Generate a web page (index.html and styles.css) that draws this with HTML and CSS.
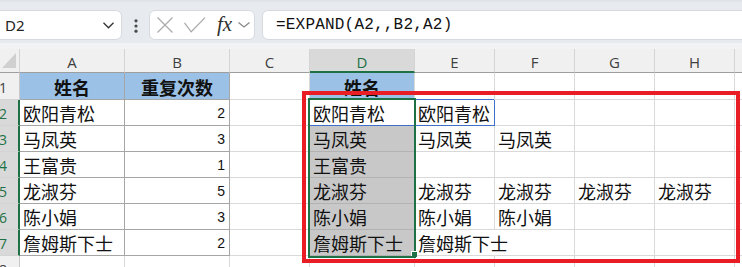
FILE: index.html
```html
<!DOCTYPE html>
<html lang="zh-CN">
<head>
    <meta charset="UTF-8">
    <meta name="viewport" content="width=device-width, initial-scale=1.0">
    <title>EXPAND</title>
    <link rel="stylesheet" href="styles.css">
</head>
<body>
    <div class="toolbar">
        <div class="namebox">
            <span>D2</span>
            <svg class="chev" width="11" height="7" viewBox="0 0 11 7"><polyline points="0.5,0.8 5.5,5.8 10.5,0.8"/></svg>
        </div>
        <svg class="dots" width="4" height="14" viewBox="0 0 4 14">
            <circle cx="2" cy="1.8" r="1.6"/><circle cx="2" cy="7" r="1.6"/><circle cx="2" cy="12.2" r="1.6"/>
        </svg>
        <div class="fxbox">
            <svg class="ico-x" width="16" height="16" viewBox="0 0 16 16"><line x1="0.5" y1="0.5" x2="15.5" y2="15.5"/><line x1="15.5" y1="0.5" x2="0.5" y2="15.5"/></svg>
            <svg class="ico-ok" width="22" height="16" viewBox="0 0 22 16"><polyline points="0.5,5.8 7.2,14.8 21,0.6"/></svg>
            <span class="fx">fx</span>
            <svg class="chev small" width="12" height="6" viewBox="0 0 12 6"><polyline points="0.5,0.5 6,5 11.5,0.5"/></svg>
        </div>
        <div class="formula">=EXPAND(A2,,B2,A2)</div>
    </div>

    <div class="sheet">
        <!-- column headers -->
        <div class="corner"><svg width="20" height="24" viewBox="0 0 20 24"><polygon points="16,4 16,19 2,19"/></svg></div>
        <div class="hd">A</div>
        <div class="hd">B</div>
        <div class="hd">C</div>
        <div class="hd on">D</div>
        <div class="hd">E</div>
        <div class="hd">F</div>
        <div class="hd">G</div>
        <div class="hd">H</div>
        <div class="hd"></div>

        <!-- row 1 -->
        <div class="rh"><span>1</span></div>
        <div class="cell th tb">姓名</div>
        <div class="cell th tb">重复次数</div>
        <div class="cell"></div>
        <div class="cell th">姓名</div>
        <div class="cell"></div>
        <div class="cell"></div>
        <div class="cell"></div>
        <div class="cell"></div>
        <div class="cell"></div>

        <!-- row 2 -->
        <div class="rh on"><span>2</span></div>
        <div class="cell tb">欧阳青松</div>
        <div class="cell tb num">2</div>
        <div class="cell"></div>
        <div class="cell act">欧阳青松</div>
        <div class="cell spill">欧阳青松</div>
        <div class="cell"></div>
        <div class="cell"></div>
        <div class="cell"></div>
        <div class="cell"></div>

        <!-- row 3 -->
        <div class="rh on"><span>3</span></div>
        <div class="cell tb">马凤英</div>
        <div class="cell tb num">3</div>
        <div class="cell"></div>
        <div class="cell sel">马凤英</div>
        <div class="cell">马凤英</div>
        <div class="cell">马凤英</div>
        <div class="cell"></div>
        <div class="cell"></div>
        <div class="cell"></div>

        <!-- row 4 -->
        <div class="rh on"><span>4</span></div>
        <div class="cell tb">王富贵</div>
        <div class="cell tb num">1</div>
        <div class="cell"></div>
        <div class="cell sel">王富贵</div>
        <div class="cell"></div>
        <div class="cell"></div>
        <div class="cell"></div>
        <div class="cell"></div>
        <div class="cell"></div>

        <!-- row 5 -->
        <div class="rh on"><span>5</span></div>
        <div class="cell tb">龙淑芬</div>
        <div class="cell tb num">5</div>
        <div class="cell"></div>
        <div class="cell sel">龙淑芬</div>
        <div class="cell">龙淑芬</div>
        <div class="cell">龙淑芬</div>
        <div class="cell">龙淑芬</div>
        <div class="cell">龙淑芬</div>
        <div class="cell"></div>

        <!-- row 6 -->
        <div class="rh on"><span>6</span></div>
        <div class="cell tb">陈小娟</div>
        <div class="cell tb num">3</div>
        <div class="cell"></div>
        <div class="cell sel">陈小娟</div>
        <div class="cell">陈小娟</div>
        <div class="cell">陈小娟</div>
        <div class="cell"></div>
        <div class="cell"></div>
        <div class="cell"></div>

        <!-- row 7 -->
        <div class="rh on"><span>7</span></div>
        <div class="cell tb">詹姆斯下士</div>
        <div class="cell tb num">2</div>
        <div class="cell"></div>
        <div class="cell sel">詹姆斯下士</div>
        <div class="cell spills">詹姆斯下士</div>
        <div class="cell"></div>
        <div class="cell"></div>
        <div class="cell"></div>
        <div class="cell"></div>

        <!-- row 8 -->
        <div class="rh"><span>8</span></div>
        <div class="cell"></div>
        <div class="cell"></div>
        <div class="cell"></div>
        <div class="cell"></div>
        <div class="cell"></div>
        <div class="cell"></div>
        <div class="cell"></div>
        <div class="cell"></div>
        <div class="cell"></div>

        <div class="selection"></div>
        <div class="handle"></div>
    </div>

    <div class="mark"></div>
</body>
</html>
```

FILE: styles.css
```css
* {
    margin: 0;
    padding: 0;
    box-sizing: border-box;
}

html, body {
    width: 742px;
    height: 267px;
    overflow: hidden;
    background: #fff;
}

body {
    position: relative;
    font-family: 'Noto Sans CJK SC', 'Noto Sans', sans-serif;
    color: #111;
}

/* formula bar */
.toolbar {
    height: 49px;
    display: flex;
    align-items: flex-start;
    padding-top: 10px;
    background: linear-gradient(#dde1e5 0, #e7ebef 3px, #e7ebef 43px, #f0f2f4 43px);
}

.namebox,
.fxbox,
.formula {
    height: 30px;
    background: #fff;
    border: 1px solid #d6dade;
    border-radius: 6px;
    display: flex;
    align-items: center;
}

.namebox {
    width: 129px;
    margin-left: -7px;
    padding-left: 11px;
    font-family: 'Noto Sans', sans-serif;
    font-size: 15px;
    color: #222;
}

.namebox span {
    flex: 1;
}

.chev {
    fill: none;
    stroke: #333;
    stroke-width: 1.3;
    margin-right: 7px;
}

.chev.small {
    stroke: #8a8a8a;
    margin: 0 0 0 6px;
}

.dots {
    fill: #4a4a4a;
    margin: 9px 0 0 12px;
}

.fxbox {
    width: 106px;
    margin-left: 11px;
    padding-left: 7px;
}

.ico-x,
.ico-ok {
    fill: none;
    stroke: #ababab;
    stroke-width: 1.3;
}

.ico-ok {
    margin-left: 11px;
}

.fx {
    margin-left: 11px;
    font-family: 'Liberation Serif', serif;
    font-style: italic;
    font-size: 21px;
    line-height: 1;
    color: #303030;
    margin-top: -2px;
}

.formula {
    flex: 1;
    margin-left: 7px;
    margin-right: -10px;
    padding-left: 13px;
    font-family: 'Liberation Mono', monospace;
    font-size: 16px;
    letter-spacing: 0.2px;
    color: #111;
}

/* grid */
.sheet {
    position: relative;
    display: grid;
    grid-template-columns: 20px 105px 105px 80px 105px 80px 80px 80px 80px 80px;
    grid-template-rows: 24px 27px repeat(7, 26px);
}

.corner,
.hd {
    background: #f0f0f0;
    border-right: 1px solid #d4d4d4;
    border-bottom: 1px solid #9e9e9e;
}

.corner svg {
    display: block;
    fill: #d0d0d0;
}

.hd {
    display: flex;
    align-items: center;
    justify-content: center;
    padding-top: 2px;
    font-family: 'Open Sans', sans-serif;
    font-size: 15px;
    color: #404040;
}

.hd.on {
    background: #d9d9d9;
    color: #1e7145;
    border-bottom: 2px solid #1e7145;
    padding-top: 3px;
}

.rh {
    background: #f0f0f0;
    border-right: 1px solid #c8c8c8;
    border-bottom: 1px solid #d4d4d4;
    display: flex;
    justify-content: flex-end;
    align-items: center;
    overflow: hidden;
    font-family: 'Open Sans', sans-serif;
    font-size: 14px;
    color: #404040;
}

.rh span {
    flex-shrink: 0;
    width: 32px;
    text-align: center;
    padding-top: 2px;
}

.rh.on {
    background: #d9d9d9;
    color: #1e7145;
    border-right: 2px solid #1e7145;
}

.rh.on span {
    margin-right: -1px;
}

.cell {
    border-right: 1px solid #d9d9d9;
    border-bottom: 1px solid #d9d9d9;
    display: flex;
    align-items: flex-end;
    padding: 0 3px 2px 3px;
    font-size: 18px;
    line-height: 20px;
    white-space: nowrap;
}

.cell.tb {
    border-color: #a6a6a6;
}

.cell.th {
    background: #9bc2e6;
    justify-content: center;
    align-items: center;
    font-weight: bold;
    padding: 1px 0 0;
}

.cell.num {
    justify-content: flex-end;
    padding: 0 4px 5px 0;
    font-family: 'Liberation Sans', sans-serif;
    font-size: 14px;
    line-height: 14px;
}

.cell.sel {
    background: #c8c8c8;
    border-bottom-color: #b2b2b2;
}

.cell.act {
    border-bottom-color: #3d6fcb;
}

.cell.spill {
    border-right-color: #3d6fcb;
    border-bottom-color: #3d6fcb;
    box-shadow: -1px -1px 0 #3d6fcb;
}

.cell.spills {
    border-right-color: transparent;
}

/* selected range D2:D7 */
.selection {
    position: absolute;
    left: 308px;
    top: 49px;
    width: 108px;
    height: 160px;
    border: 2px solid #1e7145;
    pointer-events: none;
}

.handle {
    position: absolute;
    left: 412px;
    top: 203px;
    width: 5px;
    height: 5px;
    background: #1e7145;
    box-shadow: -1px -1px 0 #fff;
}

/* red annotation box */
.mark {
    position: absolute;
    left: 302px;
    top: 91px;
    width: 438px;
    height: 172px;
    border: 4px solid #e81d25;
    pointer-events: none;
}
```
